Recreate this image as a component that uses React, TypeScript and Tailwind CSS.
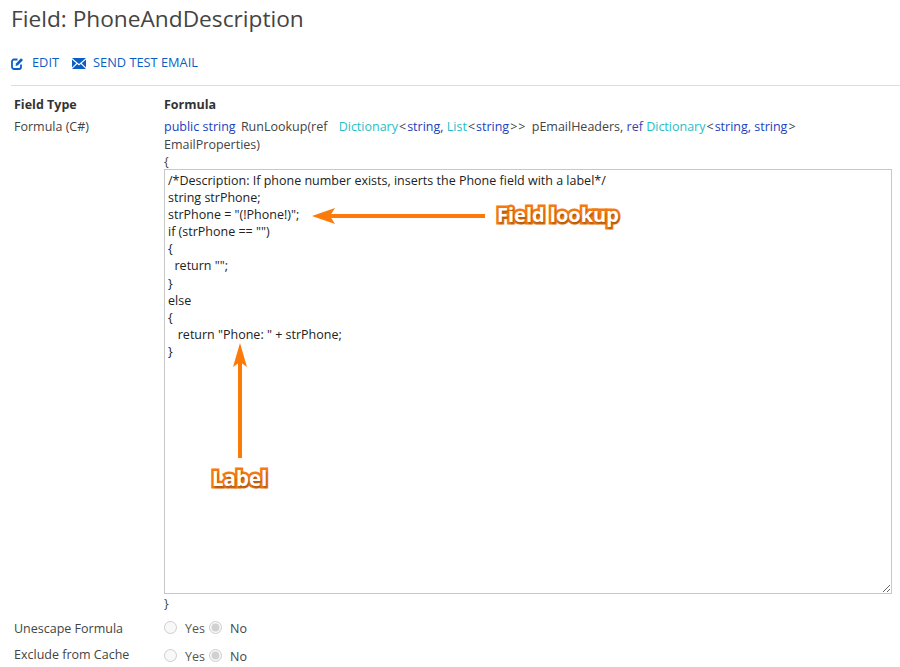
import { useState } from "react";

const formula = `/*Description: If phone number exists, inserts the Phone field with a label*/
string strPhone;
strPhone = "(!Phone!)";
if (strPhone == "")
{
  return "";
}
else
{
   return "Phone: " + strPhone;
}`;

function YesNo({ name }: { name: string }) {
  return (
    <div className="flex h-[18px] items-center">
      <input type="radio" name={name} disabled className="m-0 h-[13px] w-[13px] accent-gray-400" />
      <span className="ml-[8px] mt-[5px] text-[#555]">Yes</span>
      <input type="radio" name={name} disabled defaultChecked className="m-0 ml-[4px] h-[13px] w-[13px] accent-gray-400" />
      <span className="ml-[8px] mt-[5px] text-[#444]">No</span>
    </div>
  );
}

function Callout({ text, className }: { text: string; className: string }) {
  return (
    <span
      className={`absolute whitespace-nowrap font-['Open_Sans',sans-serif] font-bold leading-none text-white [paint-order:stroke_fill] [-webkit-text-stroke:5px_#f47a10] [text-shadow:1px_2px_2px_rgba(0,0,0,0.3)] ${className}`}
    >
      {text}
    </span>
  );
}

export default function App() {
  const [value, setValue] = useState(formula);

  return (
    <div className="relative h-[667px] w-[900px] overflow-hidden bg-white font-['Open_Sans',sans-serif] text-[12.5px] text-[#444]">
      <h1 className="ml-[11px] pt-[5px] text-[22.7px] leading-[28px] text-[#444]">
        Field: PhoneAndDescription
      </h1>

      <div className="ml-[11px] mt-[17px] flex h-[26px] items-center gap-[13px] text-[12.8px] text-[#0b5fc4]">
        <a className="flex items-center gap-[8px]">
          <svg width="13" height="13" viewBox="0 0 13 13" fill="none">
            <path d="M10 7.5V10a2 2 0 0 1-2 2H3a2 2 0 0 1-2-2V4.5a2 2 0 0 1 2-2h3.5" stroke="#0b5fc4" strokeWidth="1.8" />
            <path d="M5 6.5 10 1.2 12 3 7 8.3 4.6 8.9Z" fill="#0b5fc4" />
          </svg>
          EDIT
        </a>
        <a className="flex items-center gap-[7px]">
          <svg width="14" height="11" viewBox="0 0 14 11" fill="#0b5fc4">
            <path d="M0 0h14L7 6Z" />
            <path d="M0 1.6 4.3 5.2 0 9.6ZM14 1.6 9.7 5.2 14 9.6ZM5.2 6 7 7.5 8.8 6 14 11H0Z" />
          </svg>
          SEND TEST EMAIL
        </a>
      </div>

      <hr className="ml-[11px] mt-[9px] border-t border-[#ddd]" />

      <div className="mt-[9px] grid grid-cols-[150px_728px] pl-[14px]">
        <div className="font-bold leading-[20px] text-[#333]">Field Type</div>
        <div className="font-bold leading-[20px] text-[#333]">Formula</div>

        <div className="mt-[3px] leading-[18px]">Formula (C#)</div>
        <div className="mt-[3px]">
          <div className="leading-[18px]">
            <span className="text-[#1a3fc0]">public string</span> <span className="ml-[2px]">RunLookup(ref</span>{"   "}
            <span className="ml-[8px] text-[#1fc0c8]">Dictionary</span>
            <span className="mx-[1px]">&lt;</span><span className="text-[#1a3fc0]">string</span>,{" "}
            <span className="text-[#1fc0c8]">List</span>
            <span className="mx-[1px]">&lt;</span><span className="text-[#1a3fc0]">string</span>
            <span className="mx-[1px]">&gt;</span><span className="mr-[3px]">&gt;</span> pEmailHeaders,{" "}
            <span className="text-[#3a3fb0]">ref</span>{" "}
            <span className="text-[#1fc0c8]">Dictionary</span>
            <span className="mx-[1px]">&lt;</span><span className="text-[#1a3fc0]">string, string</span>
            <span className="ml-[1px]">&gt;</span>
            <br />
            EmailProperties)
          </div>
          <div className="leading-[15px]">{"{"}</div>
          <textarea
            value={value}
            onChange={(e) => setValue(e.target.value)}
            spellCheck={false}
            className="block h-[425px] w-[728px] resize border border-[#c8c8c8] px-[3px] py-[2px] leading-[17.1px] text-[#222] outline-none"
          />
          <div className="mt-[1px] leading-[18px]">{"}"}</div>
        </div>

        <div className="mt-[7px] leading-[18px]">Unescape Formula</div>
        <div className="mt-[5px]"><YesNo name="unescape" /></div>
        <div className="mt-[8px] leading-[18px]">Exclude from Cache</div>
        <div className="mt-[8px]"><YesNo name="cache" /></div>
      </div>

      {/* annotations drawn over the screenshot */}
      <svg className="absolute left-0 top-0" width="900" height="667" fill="#fb7a0a">
        <rect x="328" y="214" width="157" height="4" />
        <path d="M312 216 335 208 330 216 335 224Z" />
        <rect x="238" y="360" width="4" height="98" />
        <path d="M240 343 233 367 240 362 247 367Z" />
      </svg>
      <Callout text="Field lookup" className="left-[497px] top-[205px] text-[20px]" />
      <Callout text="Label" className="left-[212px] top-[468px] text-[20.5px]" />
    </div>
  );
}
